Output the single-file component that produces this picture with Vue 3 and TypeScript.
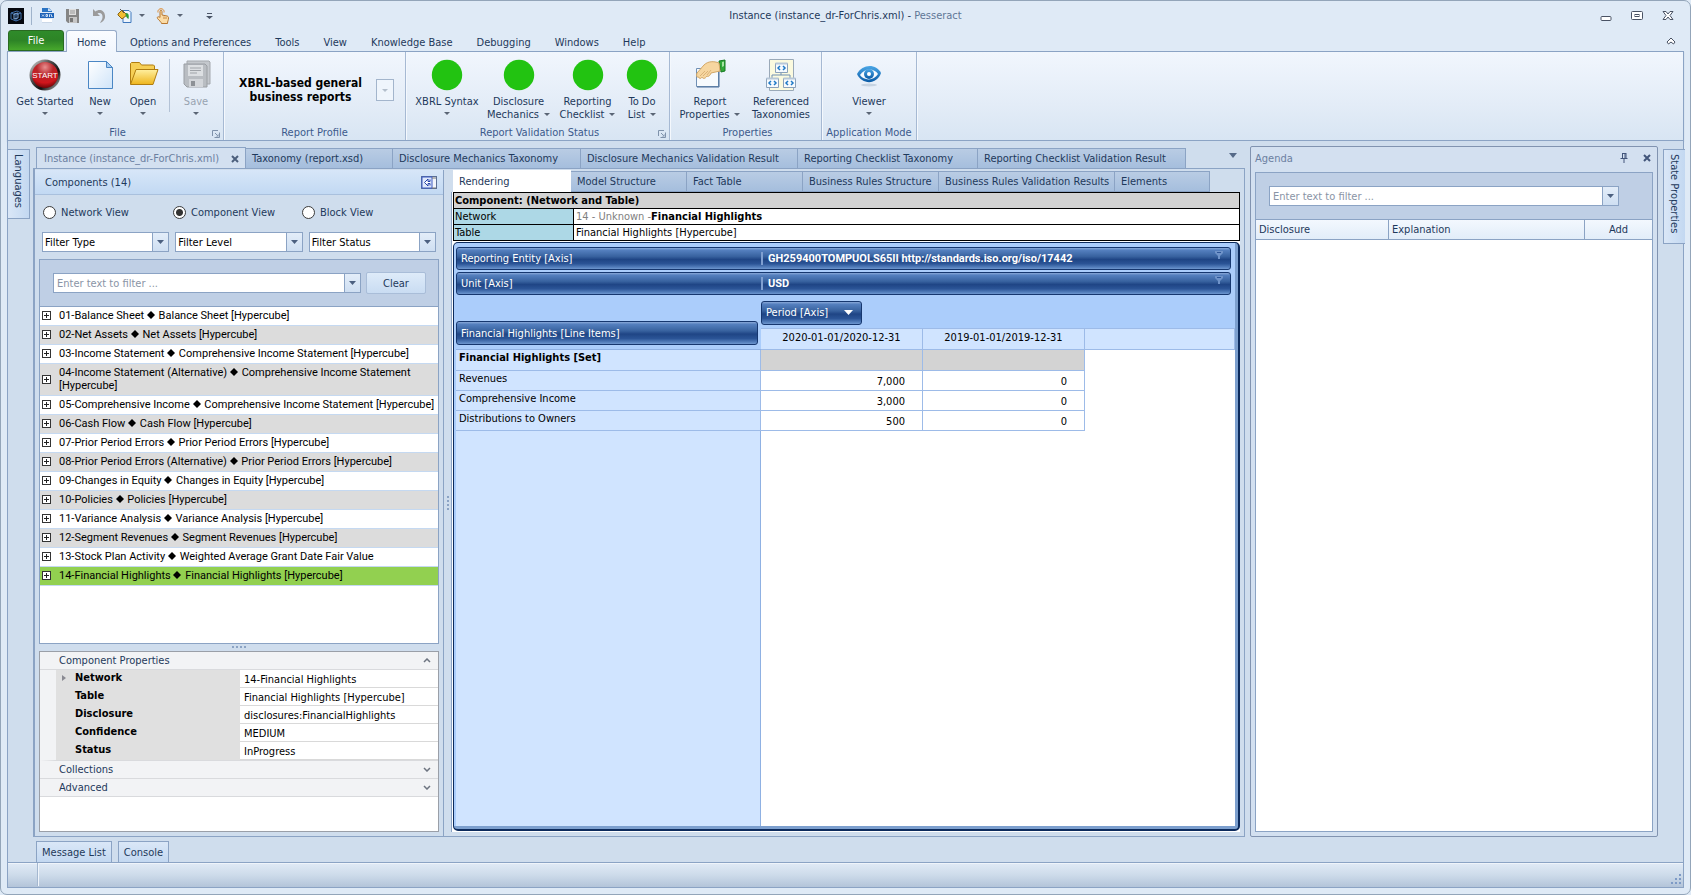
<script setup lang="ts">
import { ref } from 'vue'

interface Status { label: string[]; width: string }
interface Row { label: string; values: string[] }

const menu: string[] = ['Options and Preferences', 'Tools', 'View', 'Knowledge Base', 'Debugging', 'Windows', 'Help']

const statuses: Status[] = [
  { label: ['XBRL Syntax'], width: 'w74' },
  { label: ['Disclosure', 'Mechanics'], width: 'w69' },
  { label: ['Reporting', 'Checklist'], width: 'w69' },
  { label: ['To Do', 'List'], width: 'w40' },
]

const docTabs = [
  { label: 'Taxonomy (report.xsd)', cls: 'd1' },
  { label: 'Disclosure Mechanics Taxonomy', cls: 'd2' },
  { label: 'Disclosure Mechanics Validation Result', cls: 'd3' },
  { label: 'Reporting Checklist Taxonomy', cls: 'd4' },
  { label: 'Reporting Checklist Validation Result', cls: 'd5' },
]

const viewTabs = [
  { label: 'Model Structure', cls: 'v1' },
  { label: 'Fact Table', cls: 'v1' },
  { label: 'Business Rules Structure', cls: 'v2' },
  { label: 'Business Rules Validation Results', cls: 'v3' },
  { label: 'Elements', cls: 'v4' },
]

const view = ref('Component View')
const views: string[] = ['Network View', 'Component View', 'Block View']
const filters: string[] = ['Filter Type', 'Filter Level', 'Filter Status']

const components: [string, string][] = [
  ['01-Balance Sheet', 'Balance Sheet [Hypercube]'],
  ['02-Net Assets', 'Net Assets [Hypercube]'],
  ['03-Income Statement', 'Comprehensive Income Statement [Hypercube]'],
  ['04-Income Statement (Alternative)', 'Comprehensive Income Statement [Hypercube]'],
  ['05-Comprehensive Income', 'Comprehensive Income Statement [Hypercube]'],
  ['06-Cash Flow', 'Cash Flow [Hypercube]'],
  ['07-Prior Period Errors', 'Prior Period Errors [Hypercube]'],
  ['08-Prior Period Errors (Alternative)', 'Prior Period Errors [Hypercube]'],
  ['09-Changes in Equity', 'Changes in Equity [Hypercube]'],
  ['10-Policies', 'Policies [Hypercube]'],
  ['11-Variance Analysis', 'Variance Analysis [Hypercube]'],
  ['12-Segment Revenues', 'Segment Revenues [Hypercube]'],
  ['13-Stock Plan Activity', 'Weighted Average Grant Date Fair Value'],
  ['14-Financial Highlights', 'Financial Highlights [Hypercube]'],
]
const selected = ref(13)

const properties: [string, string][] = [
  ['Network', '14-Financial Highlights'],
  ['Table', 'Financial Highlights [Hypercube]'],
  ['Disclosure', 'disclosures:FinancialHighlights'],
  ['Confidence', 'MEDIUM'],
  ['Status', 'InProgress'],
]

const periods: string[] = ['2020-01-01/2020-12-31', '2019-01-01/2019-12-31']
const facts: Row[] = [
  { label: 'Revenues', values: ['7,000', '0'] },
  { label: 'Comprehensive Income', values: ['3,000', '0'] },
  { label: 'Distributions to Owners', values: ['500', '0'] },
]
</script>

<template>
  <div class="window">
    <header class="titlebar">
      <div class="quick">
        <svg class="i16" viewBox="0 0 16 16"><rect width="16" height="16" fill="#05080f" /><g fill="none" stroke="#3f6ea8" stroke-width="1"><path d="M3 5l6-2 4 2v6l-5 2-5-2zM3 5l5 2 5-2M8 7v6" /><path d="M6 6l4-1v5l-4 1z" stroke="#7fa6d8" /></g></svg>
        <i class="bar"></i>
        <button class="q xb" aria-label="XBRL"><svg class="i16" viewBox="0 0 16 16"><path d="M3 0h7l3 3v1H3z" fill="#2b74c4" /><path d="M9 0l4 3H9z" fill="#cfe2f6" /><rect x="1" y="5" width="14" height="5" fill="#1d62b8" /><path d="M3 6.500l2 2m0-2l-2 2M7 6.500v2h1.500v-2zM10.500 9V6.500h1m1 0v2h1" stroke="#cfe0f4" fill="none" /><rect x="3" y="11" width="10" height="4" fill="#fff" /><path d="M3 14.500h10" stroke="#cbd8e8" /></svg></button>
        <button class="q sv" aria-label="Save"><svg class="i16" viewBox="0 0 16 16"><path d="M1 1h13v14H3l-2-2z" fill="#858585" /><path d="M4 1h7v6H4z" fill="#dedede" /><path d="M5 3h5M5 5h5" stroke="#999" /><path d="M4 9h8v6H4z" fill="#c6c6c6" /><path d="M5 10h3v4H5z" fill="#777" /></svg></button>
        <button class="q un" aria-label="Undo"><svg class="i16" viewBox="0 0 16 16"><path d="M2 1v7h7L6.500 5.500c3-1.500 5.500.500 5 4-.2 2-1.500 3.500-2.500 5.500 3.500-1.500 5.500-4 5-7.500C13.500 2 8 .5 4.500 3.500z" fill="#9b9b9b" /></svg></button>
        <button class="q pt" aria-label="Appearance"><svg class="i16" viewBox="0 0 16 16"><path d="M6 2.500h6l2 2v10H6z" fill="#eef5fd" stroke="#3f78bd" /><path d="M1 6l4-4 5 5-5 4-4-4z" fill="#f1bd33" stroke="#8a6412" /><path d="M3 1l4 4" stroke="#555" /><path d="M9 5c3 0 3 3 2.500 6-1.500-1-3-2.500-3-5z" fill="#2d9a35" /></svg></button>
        <button class="dd" aria-label="Appearance options"><svg class="arw" viewBox="0 0 6 3"><path d="M0 0h6L3 3z" /></svg></button>
        <button class="q hd" aria-label="Touch mode"><svg class="i16" viewBox="0 0 16 16"><path d="M5 3.500c0-1.800 2-1.800 2 0V7l5 1c1.200.3 1.500 1 1.500 2 0 2.500-1 3-1 5.500H6.500c0-1.500-2.500-3-4-5C1.500 9 3.500 8 5 9.500z" fill="#fbdca6" stroke="#b8772f" /><path d="M9 8.500V11m2-2v2" stroke="#c98a44" fill="none" /><path d="M3 4.500c-1-5 7-5 6 0" fill="none" stroke="#de8a2e" /></svg></button>
        <button class="dd" aria-label="Touch mode options"><svg class="arw" viewBox="0 0 6 3"><path d="M0 0h6L3 3z" /></svg></button>
        <button class="dd cust" aria-label="Customize toolbar"><svg width="7" height="6" viewBox="0 0 7 6"><path d="M1 0h5v1H1zM0 3h7L3.500 6z" fill="#4a5566" /></svg></button>
      </div>
      <h1>Instance (instance_dr-ForChris.xml) - <span>Pesseract</span></h1>
      <div class="winbtns">
        <button aria-label="Minimize"><svg width="12" height="14" viewBox="0 0 12 14"><rect x="1" y="7.500" width="10" height="4" rx="1" fill="#fff" stroke="#4a5364" /></svg></button>
        <button aria-label="Maximize"><svg width="12" height="14" viewBox="0 0 12 14"><rect x=".5" y="2.500" width="11" height="8" rx="1" fill="#fff" stroke="#4a5364" /><rect x="4" y="5.500" width="4" height="2" fill="none" stroke="#4a5364" /></svg></button>
        <button aria-label="Close"><svg width="12" height="14" viewBox="0 0 12 14"><path d="M1 2.500h3L6 5l2-2.500h3L8 6.500l3 4H8L6 8l-2 2.500H1l3-4z" fill="#fff" stroke="#4a5364" stroke-linejoin="round" /></svg></button>
      </div>
    </header>

    <nav class="menu">
      <button class="file">File</button>
      <button class="home">Home</button>
      <button v-for="m in menu" :key="m" class="mi">{{ m }}</button>
      <button class="collapse" aria-label="Collapse ribbon"><svg width="10" height="8" viewBox="0 0 10 8"><path d="M5 1l4 4-1.500 2L5 5 2.500 7 1 5z" fill="#fff" stroke="#4a5364" stroke-linejoin="round" /></svg></button>
    </nav>

    <section class="ribbon">
      <div class="group g-file">
        <div class="items">
          <button class="rb w66">
            <svg class="i32" viewBox="0 0 32 32"><defs><radialGradient id="rd" cx=".5" cy=".2" r=".8"><stop offset="0" stop-color="#e88f8f" /><stop offset=".4" stop-color="#b8252a" /><stop offset=".75" stop-color="#d0161c" /><stop offset="1" stop-color="#6e0508" /></radialGradient><linearGradient id="rim" x1="0" y1="0" x2="1" y2="1"><stop offset="0" stop-color="#eee" /><stop offset=".35" stop-color="#555" /><stop offset=".65" stop-color="#111" /><stop offset="1" stop-color="#ccc" /></linearGradient></defs><circle cx="16" cy="16" r="15.500" fill="url(#rim)" /><circle cx="16" cy="16" r="13" fill="url(#rd)" /><text x="16" y="19" class="start">START</text></svg>
            <span>Get Started</span><svg class="arw" viewBox="0 0 6 3"><path d="M0 0h6L3 3z" /></svg>
          </button>
          <button class="rb w44">
            <svg class="i32" viewBox="0 0 32 32"><defs><linearGradient id="pg" x1="0" y1="0" x2="1" y2="1"><stop offset="0" stop-color="#fff" /><stop offset="1" stop-color="#cfe4f9" /></linearGradient></defs><path d="M4.500 2.500h18l6 6v21h-24z" fill="url(#pg)" stroke="#4a86c4" /><path d="M22.500 2.500v6h6z" fill="#a9cdf0" stroke="#4a86c4" /></svg>
            <span>New</span><svg class="arw" viewBox="0 0 6 3"><path d="M0 0h6L3 3z" /></svg>
          </button>
          <button class="rb w42">
            <svg class="i32" viewBox="0 0 32 32"><defs><linearGradient id="fd" x1="0" y1="0" x2="0" y2="1"><stop offset="0" stop-color="#fff0a0" /><stop offset="1" stop-color="#eeb51c" /></linearGradient></defs><path d="M3.500 25V4.500l1-1h8l2 2.500h12l1 1V12" fill="#f6cf56" stroke="#b07d10" /><path d="M3.500 25.500L9 10.500h22l-5 15z" fill="url(#fd)" stroke="#b07d10" stroke-linejoin="round" /></svg>
            <span>Open</span><svg class="arw" viewBox="0 0 6 3"><path d="M0 0h6L3 3z" /></svg>
          </button>
          <i class="vsep"></i>
          <button class="rb w44 off" disabled>
            <svg class="i32" viewBox="0 0 32 32"><path d="M7 2h22l1 1v22H7z" fill="#c4c8cd" stroke="#a4a8ad" /><path d="M4 5h21l2 2v21H7l-3-3z" fill="#b9bdc2" stroke="#9a9ea3" /><path d="M8 6h15v11H8z" fill="#dcdfe2" /><path d="M10 9h11M10 11.500h11M10 14h7" stroke="#a0a4a9" /><path d="M9 20h14v8H9z" fill="#d3d6da" /><path d="M11 22h4v5h-4z" fill="#8d9196" /></svg>
            <span>Save</span><svg class="arw" viewBox="0 0 6 3"><path d="M0 0h6L3 3z" /></svg>
          </button>
        </div>
        <div class="cap"><span>File</span><button class="launch" aria-label="File options"><svg width="8" height="8" viewBox="0 0 8 8"><path d="M.5 6V.5H6M3 3l2 2M7.500 2.500v5h-5" fill="none" stroke="#7f92ab" /><path d="M4 6.500h2.500V4z" fill="#7f92ab" /></svg></button></div>
      </div>
      <div class="group g-prof">
        <div class="items prof">
          <strong>XBRL-based general<br />business reports</strong>
          <button class="pdd" aria-label="Choose report profile"><svg class="arw" viewBox="0 0 6 3"><path d="M0 0h6L3 3z" /></svg></button>
        </div>
        <div class="cap"><span>Report Profile</span></div>
      </div>
      <div class="group g-val">
        <div class="items">
          <button v-for="s in statuses" :key="s.label[0]" class="rb" :class="s.width">
            <svg class="i32" viewBox="0 0 32 32"><circle cx="16" cy="16" r="15.200" fill="#22c311" /></svg>
            <span>{{ s.label[0] }}</span>
            <span v-if="s.label[1]" class="ln2">{{ s.label[1] }}<svg class="arw" viewBox="0 0 6 3"><path d="M0 0h6L3 3z" /></svg></span>
            <svg v-else class="arw" viewBox="0 0 6 3"><path d="M0 0h6L3 3z" /></svg>
          </button>
        </div>
        <div class="cap"><span>Report Validation Status</span><button class="launch" aria-label="Validation options"><svg width="8" height="8" viewBox="0 0 8 8"><path d="M.5 6V.5H6M3 3l2 2M7.500 2.500v5h-5" fill="none" stroke="#7f92ab" /><path d="M4 6.500h2.500V4z" fill="#7f92ab" /></svg></button></div>
      </div>
      <div class="group g-prop">
        <div class="items">
          <button class="rb w72">
            <svg class="i32" viewBox="0 0 32 32"><path d="M2.500 9.500h22v18h-22z" fill="#f7fafd" stroke="#6f8fb4" /><path d="M25 10v18H3" stroke="#4d6f99" fill="none" /><path d="M25 2l6-1v11l-4 1z" fill="#31a83a" stroke="#187a22" /><path d="M28 3l2-.5V7l-2 1z" fill="#a5e3a2" /><path d="M25 4C20 2 14 2 10 6l-7 8c-1 3 0 5 2 4 0 2 2 2 3 0 1 2 3 2 5-1 1 1 3 0 4-3l9-2z" fill="#f6d6a0" stroke="#d3a766" /><path d="M6 17l5-5M9 17l5-5M13 16l4-5" stroke="#dcb377" /></svg>
            <span>Report</span><span class="ln2">Properties<svg class="arw" viewBox="0 0 6 3"><path d="M0 0h6L3 3z" /></svg></span>
          </button>
          <button class="rb w70">
            <svg class="i32" viewBox="0 0 32 32"><path d="M4.500.5h24v31h-24z" fill="#fbfadf" stroke="#9aa9b8" /><path d="M16 12v4M7 20v-4h18v4" fill="none" stroke="#6f8fb4" /><g fill="#f6fafe" stroke="#8aa1ba"><path d="M10.500 4.500h12v9h-12z" /><path d="M1.500 19.500h12v9h-12zM18.500 19.500h12v9h-12z" /></g><path d="M10.500 4.500h12M1.500 19.500h12M18.500 19.500h12" stroke="#b7c7d8" stroke-width="2" /><path d="M15 7l-2 2 2 2m3-4l2 2-2 2M6 22l-2 2 2 2m3-4l2 2-2 2M23 22l-2 2 2 2m3-4l2 2-2 2" fill="none" stroke="#1f79c6" stroke-width="1.500" /></svg>
            <span>Referenced</span><span class="ln2">Taxonomies</span>
          </button>
        </div>
        <div class="cap"><span>Properties</span></div>
      </div>
      <div class="group g-app">
        <div class="items ctr">
          <button class="rb w66">
            <svg class="i32" viewBox="0 0 32 32"><defs><linearGradient id="ey" x1="0" y1="0" x2="0" y2="1"><stop offset="0" stop-color="#4aa6e6" /><stop offset="1" stop-color="#0a5ba6" /></linearGradient></defs><ellipse cx="16" cy="26" rx="8" ry="1.500" fill="#c7d4e2" /><path d="M4 15C9 5 23 4 28 14 24 26 9 26 4 15z" fill="url(#ey)" /><path d="M7 16c4-7 14-7.500 18-1-4 7-14 7-18 1z" fill="#f7fbff" /><circle cx="16" cy="15" r="5" fill="url(#ey)" /><circle cx="16" cy="15" r="2" fill="#fff" /></svg>
            <span>Viewer</span><svg class="arw" viewBox="0 0 6 3"><path d="M0 0h6L3 3z" /></svg>
          </button>
        </div>
        <div class="cap"><span>Application Mode</span></div>
      </div>
    </section>

    <main class="dock">
      <aside class="side"><button class="vtab">Languages</button></aside>

      <section class="docs">
        <div class="doctabs">
          <div class="dt act"><button>Instance (instance_dr-ForChris.xml)</button><button class="x" aria-label="Close document"><svg width="8" height="8" viewBox="0 0 8 8"><path d="M1 1l6 6M7 1L1 7" stroke="#4c5f7c" stroke-width="2" /></svg></button></div>
          <button v-for="t in docTabs" :key="t.label" class="dt" :class="t.cls">{{ t.label }}</button>
          <button class="more" aria-label="More documents"><svg width="8" height="5" viewBox="0 0 8 5"><path d="M0 0h8L4 5z" fill="#566a88" /></svg></button>
        </div>
        <div class="docbody">
          <section class="comp">
            <h2><span>Components (14)</span><button aria-label="Toggle panel"><svg width="16" height="13" viewBox="0 0 16 13"><rect x=".5" y=".5" width="15" height="12" fill="#f2f5fb" stroke="#5b6f95" /><path d="M1 1h10v11H1z" fill="#dfe8fa" stroke="#3c5bc4" /><path d="M9 3.500v2H7V3L3.500 6.500 7 10V7.500h2v2" fill="#fff" stroke="#2440a8" /><path d="M11 2h4M11 12h4" stroke="#777" /></svg></button></h2>
            <div class="radios">
              <label v-for="v in views" :key="v"><input v-model="view" type="radio" name="view" :value="v" />{{ v }}</label>
            </div>
            <div class="combos">
              <div v-for="f in filters" :key="f" class="combo">
                <select :aria-label="f"><option>{{ f }}</option></select>
                <span class="cb"><svg width="7" height="4" viewBox="0 0 7 4"><path d="M0 0h7L3.500 4z" fill="#4c6080" /></svg></span>
              </div>
            </div>
            <div class="listbox">
              <div class="filter">
                <div class="tf"><input type="text" placeholder="Enter text to filter ..." aria-label="Filter components" /><button class="cb" aria-label="Filter history"><svg width="7" height="4" viewBox="0 0 7 4"><path d="M0 0h7L3.500 4z" fill="#4c6080" /></svg></button></div>
                <button class="clear">Clear</button>
              </div>
              <ul>
                <li v-for="(c, i) in components" :key="c[0]" :class="{ sel: selected === i }" @click="selected = i">
                  <button class="plus" aria-label="Expand"><svg width="9" height="9" viewBox="0 0 9 9"><rect x=".5" y=".5" width="8" height="8" fill="#fff" stroke="#333" /><path d="M2 4.500h5M4.500 2v5" stroke="#222" /></svg></button>
                  <span>{{ c[0] }} <svg class="dia" viewBox="0 0 8 8"><path d="M4 0l4 4-4 4-4-4z" /></svg> {{ c[1] }}</span>
                </li>
              </ul>
            </div>
            <div class="hsplit"><i></i><i></i><i></i><i></i></div>
            <div class="props">
              <button class="cat">Component Properties<svg width="8" height="5" viewBox="0 0 8 5"><path d="M1 4l3-3 3 3" /></svg></button>
              <table>
                <tbody>
                  <tr v-for="(p, i) in properties" :key="p[0]">
                    <th scope="row"><span class="mk"><svg v-if="i === 0" width="4" height="6" viewBox="0 0 4 6"><path d="M0 0l4 3-4 3z" fill="#8a8a92" /></svg></span>{{ p[0] }}</th>
                    <td>{{ p[1] }}</td>
                  </tr>
                </tbody>
              </table>
              <button class="cat">Collections<svg width="8" height="5" viewBox="0 0 8 5"><path d="M1 1l3 3 3-3" /></svg></button>
              <button class="cat">Advanced<svg width="8" height="5" viewBox="0 0 8 5"><path d="M1 1l3 3 3-3" /></svg></button>
            </div>
          </section>

          <div class="vsplit"><i></i><i></i><i></i><i></i></div>

          <section class="render">
            <div class="vtabs">
              <button class="vt on">Rendering</button>
              <button v-for="t in viewTabs" :key="t.label" class="vt" :class="t.cls">{{ t.label }}</button>
            </div>
            <div class="page">
              <table class="info">
                <tbody>
                  <tr><th colspan="2">Component: (Network and Table)</th></tr>
                  <tr><td class="k">Network</td><td><span class="dim">14 - Unknown -</span><b>Financial Highlights</b></td></tr>
                  <tr><td class="k">Table</td><td>Financial Highlights [Hypercube]</td></tr>
                </tbody>
              </table>
              <div class="pivot">
                <div class="axis"><span class="an">Reporting Entity [Axis]</span><b>GH259400TOMPUOLS65II http://standards.iso.org/iso/17442</b><button aria-label="Filter entity"><svg width="8" height="9" viewBox="0 0 8 9"><path d="M0 0h8v2L5 5v3H3V5L0 2z" fill="#6f93c9" /><path d="M2 1.500h4" stroke="#2d5597" /></svg></button></div>
                <div class="axis"><span class="an">Unit [Axis]</span><b>USD</b><button aria-label="Filter unit"><svg width="8" height="9" viewBox="0 0 8 9"><path d="M0 0h8v2L5 5v3H3V5L0 2z" fill="#6f93c9" /><path d="M2 1.500h4" stroke="#2d5597" /></svg></button></div>
                <div class="gridwrap">
                  <table class="grid">
                    <colgroup><col class="c0" /><col class="c1" /><col class="c1" /><col /></colgroup>
                    <thead>
                      <tr><th rowspan="2" class="li"><button class="pill full">Financial Highlights [Line Items]</button></th><th colspan="3" class="per"><button class="pill">Period [Axis]<svg width="9" height="5" viewBox="0 0 9 5"><path d="M0 0h9L4.500 5z" fill="#fff" /></svg></button></th></tr>
                      <tr class="dates"><th v-for="p in periods" :key="p" scope="col">{{ p }}</th><th></th></tr>
                    </thead>
                    <tbody>
                      <tr class="set"><th scope="row">Financial Highlights [Set]</th><td></td><td></td></tr>
                      <tr v-for="r in facts" :key="r.label"><th scope="row">{{ r.label }}</th><td v-for="(v, i) in r.values" :key="i">{{ v }}</td></tr>
                    </tbody>
                  </table>
                </div>
              </div>
            </div>
          </section>
        </div>
      </section>

      <section class="agenda">
        <h2><span>Agenda</span><button aria-label="Pin"><svg width="8" height="10" viewBox="0 0 8 10"><path d="M2 .5h4M2.500 0v5M5 0v5M6 0v5M.5 5.500h7M4 6v4" stroke="#42557a" fill="none" /></svg></button><button aria-label="Close agenda"><svg width="8" height="8" viewBox="0 0 8 8"><path d="M1 1l6 6M7 1L1 7" stroke="#42557a" stroke-width="2" /></svg></button></h2>
        <div class="abox">
          <div class="filter"><div class="tf"><input type="text" placeholder="Enter text to filter ..." aria-label="Filter agenda" /><button class="cb" aria-label="Filter history"><svg width="7" height="4" viewBox="0 0 7 4"><path d="M0 0h7L3.500 4z" fill="#4c6080" /></svg></button></div></div>
          <table><thead><tr><th class="a1">Disclosure</th><th>Explanation</th><th class="a3">Add</th></tr></thead></table>
        </div>
      </section>

      <aside class="side right"><button class="vtab">State Properties</button></aside>
    </main>

    <div class="bottom"><button>Message List</button><button>Console</button></div>
    <footer class="status"><i></i><svg width="11" height="11" viewBox="0 0 11 11"><path d="M9 1h2v2H9zM5 5h2v2H5zM9 5h2v2H9zM1 9h2v2H1zM5 9h2v2H5zM9 9h2v2H9z" fill="#7d9ac6" /></svg></footer>
  </div>
</template>

<style>
body { margin: 0; background: #dfeaf6; }
</style>

<style scoped>
* { box-sizing: border-box; }
.window { display: flex; flex-direction: column; min-height: 100vh; padding: 0 6px 6px; border: 1px solid #93a5b9; border-radius: 7px; background: #dfeaf6; font: 11px/13px "DejaVu Sans Condensed", Roboto, "Liberation Sans", sans-serif; color: #1e395b; white-space: nowrap; }
button, input, select { font: inherit; color: inherit; margin: 0; padding: 0; border: 0; background: none; }
button { display: inline-flex; align-items: center; white-space: nowrap; }
svg { display: block; flex: none; }
h1, h2, ul { margin: 0; padding: 0; font: inherit; list-style: none; }
table { border-collapse: separate; border-spacing: 0; }
th, td { padding: 0; text-align: left; }
.i16 { width: 16px; height: 16px; }
.i32 { width: 32px; height: 32px; }
.arw { width: 6px; height: 3px; fill: #5a6575; }

.titlebar { display: grid; grid-template-columns: 1fr auto 1fr; align-items: center; height: 29px; }
.titlebar h1 span { color: #5f7796; }
.quick { display: flex; align-items: center; padding-left: 1px; }
.quick .bar { width: 1px; height: 18px; background: #9fb3cb; margin: 0 7px; }
.quick .q { margin-right: 10px; }
.quick .q.pt, .quick .q.hd { margin-right: 4px; }
.quick .dd { width: 9px; margin-right: 9px; justify-content: center; }
.quick .dd.cust { margin-left: 12px; }
.winbtns { display: flex; justify-content: flex-end; gap: 19px; padding-right: 10px; }
.menu { display: flex; height: 22px; margin-bottom: -1px; z-index: 1; }
.menu button { justify-content: center; }
.menu .file { width: 56px; border: 1px solid #2a6a22; border-radius: 3px 3px 0 0; background: linear-gradient(#2f8b2a, #2d8426 50%, #47a82c); color: #fff; margin: 0 2px 1px 1px; }
.menu .home { width: 51px; margin-right: 1px; padding-top: 2px; border: 1px solid #97abc7; border-bottom: 0; border-radius: 3px 3px 0 0; background: linear-gradient(#fafcff, #f1f6fd); }
.menu .mi { padding: 2px 12px 0; }
.menu .mi + .collapse { margin-left: auto; padding-right: 8px; }
.ribbon { display: flex; height: 90px; border: 1px solid #8ba3c4; background: linear-gradient(#f1f6fd, #e3ecf7 60%, #d8e5f3); box-shadow: 0 1px 1px #b7c6da; }
.group { display: flex; flex-direction: column; border-right: 1px solid #a6b9d3; box-shadow: 1px 0 0 #f4f8fd; }
.g-file { width: 216px; padding-left: 4px; }
.g-prof { width: 182px; }
.g-val { width: 264px; padding-left: 4px; }
.g-prop { width: 152px; padding-left: 4px; }
.g-app { width: 95px; }
.items { display: flex; flex: 1; padding-top: 7px; }
.items.ctr { justify-content: center; }
.rb { flex-direction: column; align-items: center; align-self: flex-start; }
.rb > span { margin-top: 4px; }
.rb > span.ln2 { display: flex; align-items: center; gap: 5px; margin-top: 0; }
.rb > .arw { margin-top: 4px; }
.rb.off { color: #98a3b0; }
.w40 { width: 40px; } .w42 { width: 42px; } .w44 { width: 44px; } .w66 { width: 66px; }
.w69 { width: 69px; } .w70 { width: 70px; } .w72 { width: 72px; } .w74 { width: 74px; }
.vsep { width: 1px; margin: 0 4px 12px 5px; background: #b3c2d6; }
.start { font: 8px "Liberation Sans", sans-serif; fill: #fff; text-anchor: middle; }
.cap { display: flex; align-items: center; justify-content: center; height: 16px; color: #3c5a8c; position: relative; }
.launch { position: absolute; right: 3px; bottom: 2px; }
.prof { align-items: center; justify-content: center; gap: 14px; padding-top: 4px; padding-left: 4px; }
.prof strong { font-size: 12px; line-height: 14px; color: #000; text-align: center; }
.pdd { width: 18px; height: 22px; justify-content: center; border: 1px solid #a3b5cc; background: #eff5fc; }
.pdd .arw { fill: #b4bfcc; }

.dock { display: flex; flex: 1; border: solid #8ba3c4; border-width: 0 1px; background: #cfdded; padding-top: 5px; min-height: 0; }
.side { width: 25px; padding-top: 3px; }
.side.right { padding-left: 5px; }
.vtab { writing-mode: vertical-rl; padding: 4px 4px 10px; border: 1px solid #8ba3c4; background: linear-gradient(to right, #dae7f7, #c3d8f1); }
.side:not(.right) .vtab { border-left: 0; }
.side.right .vtab { border-right: 0; }
.docs { display: flex; flex-direction: column; flex: 1; min-width: 0; }
.doctabs { display: flex; height: 23px; padding: 1px 0 0 3px; margin-bottom: -1px; }
.dt { margin-top: 1px; padding-left: 6px; border: 1px solid #8ba3c4; border-right-width: 1px; border-left-width: 0; background: linear-gradient(#b9cce4, #a5bedd); }
.dt.act { display: flex; align-items: center; justify-content: space-between; width: 210px; margin-top: 0; padding: 0 6px 0 7px; border-left-width: 1px; border-bottom: 0; background: #d3e0f0; color: #6c7fa0; }
.d1 { width: 147px; } .d2 { width: 188px; } .d3 { width: 217px; } .d4 { width: 180px; } .d5 { width: 208px; }
.more { margin: 0 8px 6px auto; }
.docbody { display: flex; flex: 1; border: 1px solid #8ba3c4; border-left: 2px solid #8ba3c4; padding-top: 1px; }
.comp { display: flex; flex-direction: column; width: 409px; border-right: 1px solid #8ba3c4; }
.comp h2 { display: flex; justify-content: space-between; align-items: center; height: 25px; padding: 0 6px 0 10px; border-bottom: 1px solid #a9c0dd; background: linear-gradient(#d7e6f8, #c2d9f3); }
.radios { display: grid; grid-template-columns: 130px 129px 1fr; padding: 10px 8px 0; }
.radios label { display: flex; align-items: center; gap: 5px; height: 14px; }
.radios input { appearance: none; width: 13px; height: 13px; border: 1px solid #3b3b3b; border-radius: 50%; background: #fff; }
.radios input:checked { background: radial-gradient(circle, #333 3px, #fff 4px); }
.combos { display: grid; grid-template-columns: repeat(3, 1fr); gap: 6px; padding: 13px 7px 0; }
.combo, .tf { display: flex; position: relative; height: 20px; border: 1px solid #8ba3c4; background: #fff; }
.combo select { flex: 1; width: 100%; appearance: none; padding-left: 2px; color: #000; }
.cb { display: flex; align-items: center; justify-content: center; width: 16px; border-left: 1px solid #8ba3c4; background: linear-gradient(#e3edf9, #cfdff2); }
.combo .cb { position: absolute; top: 0; right: 0; bottom: 0; pointer-events: none; }
.tf input { flex: 1; min-width: 0; padding-left: 3px; outline: 0; }
.tf input::placeholder { color: #8a94a6; opacity: 1; }
.listbox { display: flex; flex-direction: column; flex: 1; margin: 7px 4px 0; border: 1px solid #8ba3c4; background: #fff; }
.filter { display: flex; align-items: center; gap: 5px; height: 47px; padding: 0 12px 0 13px; border-bottom: 1px solid #8ba3c4; background: #bfcfe5; }
.tf { flex: 1; }
.clear { width: 60px; height: 22px; justify-content: center; border: 1px solid #a9bdd8; border-radius: 2px; background: linear-gradient(#deebf9, #c9dcf2); }
li { display: flex; align-items: center; gap: 8px; padding: 2px 0 3px 2px; border-bottom: 1px solid #c5d9f1; color: #000; white-space: normal; font-family: Roboto, "Liberation Sans", sans-serif; }
li:nth-child(even) { background: #dcdcdc; }
li.sel { background: #92d050; }
.dia { display: inline-block; width: 8px; height: 8px; margin-right: 1px; }
.hsplit { display: flex; gap: 2px; justify-content: center; padding: 2px 0 3px; }
.hsplit i, .vsplit i { width: 2px; height: 2px; background: #8ba3c4; }
.props { height: 181px; margin: 0 4px 4px; border: 1px solid #9a9fa8; background: #fff; }
.cat { display: flex; justify-content: space-between; width: 100%; height: 18px; padding: 0 7px 0 19px; border-bottom: 1px solid #d9dadd; background: #f2f3f5; }
.cat svg { fill: none; stroke: #6d7480; stroke-width: 1.500; }
.props table { width: 100%; border-left: 16px solid #f2f3f5; border-bottom: 1px solid #d9dadd; color: #000; }
.props th { width: 184px; height: 18px; padding: 0 0 4px 6px; background: #e0e0e0; }
.props td { padding: 1px 0 0 4px; border-bottom: 1px solid #d9d9d9; }
.mk { display: inline-block; width: 13px; }
.vsplit { display: flex; flex-direction: column; gap: 2px; justify-content: center; align-items: center; width: 7px; }

.render { display: flex; flex-direction: column; flex: 1; min-width: 0; padding-right: 4px; padding-bottom: 4px; }
.vtabs { display: flex; height: 22px; padding-left: 2px; }
.vt { margin-top: 1px; padding-left: 6px; border: solid #8ba3c4; border-width: 1px 1px 1px 0; background: linear-gradient(#b9cce4, #a5bedd); }
.vt.on { width: 118px; margin-top: 0; border: 0; background: #fff; }
.v1 { width: 116px; } .v2 { width: 136px; } .v3 { width: 176px; } .v4 { width: 95px; }
.page { display: flex; flex-direction: column; flex: 1; padding: 0 0 1px 1px; background: #fff; border-left: 1px solid #8ba3c4; }
.info { width: 100%; border-collapse: collapse; color: #000; }
.info th, .info td { height: 16px; padding: 0 2px 1px; border: 1px solid #000; background: #fff; }
.info th { background: #d3d3d3; padding-left: 1px; }
.info .k { width: 120px; background: #add8e6; padding-left: 1px; }
.dim { color: #808080; }
.pivot { display: flex; flex-direction: column; flex: 1; margin-top: 1px; padding: 4px 0 0 2px; border: 1px solid #0c2a5c; border-right-width: 2px; border-bottom-width: 2px; border-radius: 5px; background: #abcdfb; box-shadow: inset -3px -3px 0 #7c9fce; }
.axis, .pill { border: 1px solid #16376f; border-radius: 3px; background: linear-gradient(#8aa9d8, #5580bf 10%, #38629f 40%, #1f4585 55%, #2b5496 75%, #5580bd 92%, #6f97cf); color: #fff; }
.axis { display: flex; align-items: center; height: 23px; margin: 0 7px 2px 0; padding-left: 4px; }
.axis .an { width: 300px; }
.axis b { flex: 1; padding-left: 5px; border-left: 2px solid #7f9fd0; font-family: Roboto, "Liberation Sans", sans-serif; }
.axis button { margin: 0 7px 6px 0; }
.gridwrap { flex: 1; margin: 0 3px 3px 0; background: linear-gradient(to right, #d0e4ff 304px, #8fb1e3 304px, #8fb1e3 305px, #fff 305px); color: #000; }
.grid { width: 100%; table-layout: fixed; }
.grid th { font-weight: normal; }
.c0 { width: 305px; } .c1 { width: 162px; }
.grid thead th { background: #abcdfb; }
.pill { padding: 0 8px 0 4px; height: 24px; gap: 16px; }
.pill.full { width: 302px; }
.grid .li { vertical-align: bottom; padding-bottom: 4px; border-bottom: 1px solid #8fb1e3; }
.grid .li .pill, .grid .per .pill { display: flex; }
.grid .per { height: 31px; vertical-align: middle; }
.grid .dates th { height: 22px; text-align: center; background: #d0e4ff; border: solid #9dbbe8; border-width: 1px 1px 1px 0; padding-bottom: 3px; }
.grid tbody th { height: 20px; padding: 0 0 5px 3px; background: #d0e4ff; border: solid #9dbbe8; border-width: 0 1px 1px 0; }
.grid tbody td { height: 20px; padding: 1px 17px 0 0; text-align: right; background: #fff; border: solid #9dbbe8; border-width: 0 1px 1px 0; }
.grid .set th { height: 21px; font-weight: bold; }
.grid .set td { background: #d3d3d3; }

.agenda { display: flex; flex-direction: column; width: 408px; margin-left: 5px; padding: 0 4px 4px; border: 1px solid #8193b0; border-radius: 2px; background: #d3e0f0; }
.agenda h2 { display: flex; align-items: center; gap: 15px; height: 25px; padding: 0 2px 3px 0; color: #6c7fa0; }
.agenda h2 span { flex: 1; }
.abox { flex: 1; border: 1px solid #8ba3c4; background: #fff; }
.abox .filter { padding: 0 33px 0 13px; }
.abox table { width: 100%; table-layout: fixed; }
.abox th { height: 20px; padding-left: 3px; font-weight: normal; border: solid #8ba3c4; border-width: 0 1px 1px 0; background: linear-gradient(#f3f8fe, #e2edf9); }
.abox .a1 { width: 133px; }
.abox .a3 { width: 67px; padding: 0; text-align: center; border-right: 0; }

.bottom { display: flex; gap: 6px; height: 25px; padding: 4px 0 0 28px; border: solid #8ba3c4; border-width: 0 1px; background: #cfdded; }
.bottom button { padding: 0 5px; border: 1px solid #8ba3c4; border-bottom: 0; background: linear-gradient(#dae7f7, #c3d8f1); }
.status { display: flex; align-items: flex-end; justify-content: space-between; height: 26px; padding: 0 2px 3px 29px; border: 1px solid #8ba3c4; background: linear-gradient(#fff, #dfe9f5 1px, #cddbea 50%, #b3c4d9); }
.status i { align-self: stretch; width: 2px; margin-bottom: -2px; border-left: 1px solid #a4b7cf; background: #f0f5fb; }
</style>
